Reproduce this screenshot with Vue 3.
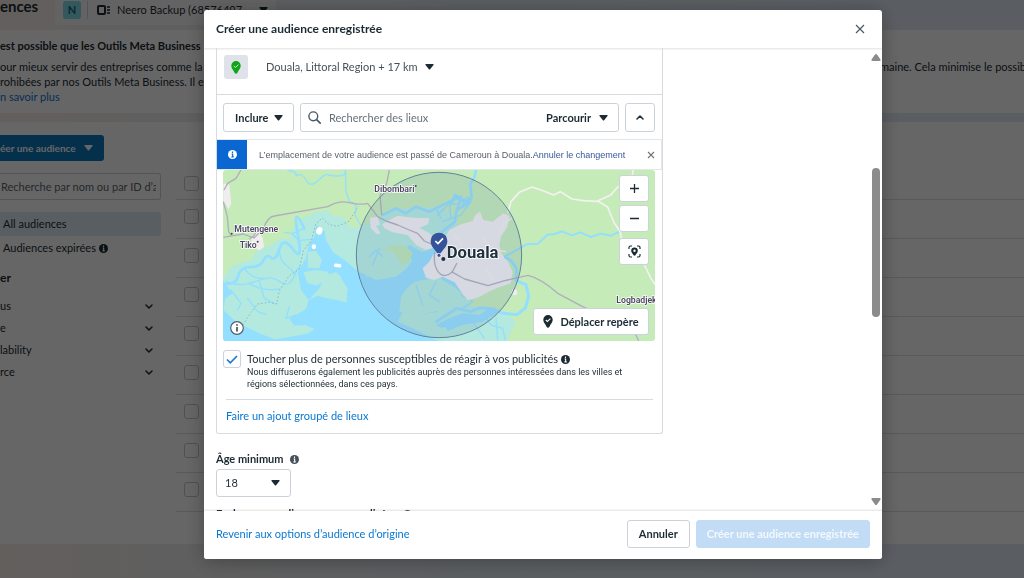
<script setup>
import { ref } from 'vue'

const rows = Array.from({ length: 8 }, (_, i) => i + 1)
const filters = ['us', 'e', 'lability', 'rce']
const search = ref('')
const place = ref('')
const reachMore = ref(true)
</script>

<template>
  <div class="page">
    <header class="topbar">
      <h1>ences</h1>
      <button class="account" type="button">
        <span class="badge">N</span>
        <span class="split"></span>
        <span class="round">
          <svg width="13" height="11" viewBox="0 0 13 11" aria-hidden="true">
            <rect x="1" y="1" width="7" height="8" rx="1" fill="none" stroke="#1c2b33" stroke-width="2" />
            <path d="M10 2h3M10 5h3M10 8h3" stroke="#1c2b33" stroke-width="1.6" />
          </svg>
        </span>
        <span class="name">Neero Backup (68576497…</span>
        <svg class="caret" width="9" height="6" viewBox="0 0 9 6" aria-hidden="true"><path d="M1 0h7q1 0 .5 1L5.300 5q-.8 1-1.600 0L.5 1Q0 0 1 0z" fill="#1c2b33" /></svg>
      </button>
    </header>

    <section class="notice">
      <h2>est possible que les Outils Meta Business</h2>
      <div class="notice-line">
        <span>our mieux servir des entreprises comme la v</span>
        <span class="tail">maine. Cela minimise le possibi</span>
      </div>
      <div class="notice-line"><span>rohibées par nos Outils Meta Business. Il est</span></div>
      <a href="#">n savoir plus</a>
    </section>

    <div class="workspace">
      <aside class="side">
        <button class="create" type="button">
          éer une audience
          <svg width="9" height="6" viewBox="0 0 9 6" aria-hidden="true"><path d="M1 0h7q1 0 .5 1L5.300 5q-.8 1-1.600 0L.5 1Q0 0 1 0z" fill="#fff" /></svg>
        </button>
        <input v-model="search" class="find" type="text" aria-label="Recherche" placeholder="Recherche par nom ou par ID d’a" />
        <a class="nav active" href="#">All audiences</a>
        <a class="nav" href="#">
          Audiences expirées
          <svg width="9" height="9" viewBox="0 0 10 10" aria-hidden="true"><circle cx="5" cy="5" r="5" fill="#1c2b33" /><path d="M5 1.700v1.500M4 4.500h1.200v3M3.800 7.600h2.600" stroke="#fff" stroke-width="1.200" fill="none" /></svg>
        </a>
        <h3>er</h3>
        <button v-for="f in filters" :key="f" class="filter" type="button">
          <span>{{ f }}</span>
          <svg width="8" height="5" viewBox="0 0 8 5" aria-hidden="true"><path d="M1 1l3 3 3-3" fill="none" stroke="#1c2b33" stroke-width="1.500" stroke-linecap="round" stroke-linejoin="round" /></svg>
        </button>
      </aside>
      <div class="list">
        <div class="list-row list-head">
          <input type="checkbox" aria-label="Tout sélectionner" />
        </div>
        <div v-for="r in rows" :key="r" class="list-row">
          <input type="checkbox" :aria-label="'Audience ' + r" />
        </div>
      </div>
    </div>

    <div class="overlay">
      <div class="modal" role="dialog" aria-labelledby="dialog-title">
        <header class="modal-head">
          <h2 id="dialog-title">Créer une audience enregistrée</h2>
          <button class="plain" type="button" aria-label="Fermer">
            <svg width="10" height="10" viewBox="0 0 10 10"><path d="M1 1l8 8M9 1l-8 8" stroke="#465a69" stroke-width="1.200" /></svg>
          </button>
        </header>

        <div class="modal-body">
          <div class="content">
            <section class="card">
              <div class="place">
                <span class="place-icon">
                  <svg width="10" height="13" viewBox="0 0 10 13" aria-hidden="true"><path d="M5 0a4.700 4.700 0 0 1 4.700 4.800C9.700 7.600 7.500 9.300 6.600 11.500Q5 14 3.400 11.500C2.500 9.300.3 7.600.3 4.800A4.700 4.700 0 0 1 5 0z" fill="#0fa516" /><path d="M2.800 5l1.600 1.500 3-2.800" fill="none" stroke="#d7efd9" stroke-width="1" /></svg>
                </span>
                <button class="plain radius" type="button">
                  Douala, Littoral Region + 17 km
                  <svg width="9" height="6" viewBox="0 0 9 6" aria-hidden="true"><path d="M1 0h7q1 0 .5 1L5.300 5q-.8 1-1.600 0L.5 1Q0 0 1 0z" fill="#1c2b33" /></svg>
                </button>
              </div>

              <div class="controls">
                <span class="select include">
                  <select aria-label="Mode"><option>Inclure</option></select>
                  <svg width="9" height="6" viewBox="0 0 9 6" aria-hidden="true"><path d="M1 0h7q1 0 .5 1L5.300 5q-.8 1-1.600 0L.5 1Q0 0 1 0z" fill="#1c2b33" /></svg>
                </span>
                <div class="searchbox">
                  <svg width="13" height="13" viewBox="0 0 13 13" aria-hidden="true"><circle cx="5.300" cy="5.300" r="4.400" fill="none" stroke="#465a69" stroke-width="1.400" /><path d="M8.600 8.600l3.600 3.600" stroke="#465a69" stroke-width="1.700" stroke-linecap="round" /></svg>
                  <input v-model="place" type="text" aria-label="Lieux" placeholder="Rechercher des lieux" />
                  <button class="plain browse" type="button">
                    Parcourir
                    <svg width="9" height="6" viewBox="0 0 9 6" aria-hidden="true"><path d="M1 0h7q1 0 .5 1L5.300 5q-.8 1-1.600 0L.5 1Q0 0 1 0z" fill="#1c2b33" /></svg>
                  </button>
                </div>
                <button class="btn fold" type="button" aria-label="Réduire">
                  <svg width="8" height="5" viewBox="0 0 8 5"><path d="M1 4l3-3 3 3" fill="none" stroke="#1c2b33" stroke-width="1.500" stroke-linecap="round" stroke-linejoin="round" /></svg>
                </button>
              </div>

              <div class="alert">
                <span class="alert-icon">
                  <svg width="9" height="9" viewBox="0 0 10 10" aria-hidden="true"><circle cx="5" cy="5" r="5" fill="#fff" /><path d="M5 1.700v1.500M4 4.500h1.200v3M3.800 7.600h2.600" stroke="#0a66d0" stroke-width="1.300" fill="none" /></svg>
                </span>
                <p>L’emplacement de votre audience est passé de Cameroun à Douala.<a href="#">Annuler le changement</a></p>
                <button class="plain" type="button" aria-label="Masquer">
                  <svg width="8" height="8" viewBox="0 0 8 8"><path d="M1 1l6 6M7 1l-6 6" stroke="#70757b" stroke-width="1.100" /></svg>
                </button>
              </div>

              <div class="map">
                <svg class="map-art" viewBox="21 15 1296 513" preserveAspectRatio="xMidYMid slice">
                  <rect x="0" y="0" width="1340" height="540" fill="#c4ebb8" />
                  <!-- coast and mangroves -->
                  <path d="M0 355L24 338 45 304 110 282 118 262 165 240 195 220 222 222 232 186 262 160 300 142 336 136 352 155 380 152 402 185 430 190 450 178 480 160 510 150 540 128 575 132 600 122 640 128 670 124 700 140 740 200 690 330 760 400 850 430 900 470 865 540 0 540z" fill="#b3e9df" />
                  <path d="M0 345L22 350 50 385 28 400 22 435 60 470 130 505 190 528 0 540z" fill="#93dfff" />
                  <path d="M150 528L275 506 296 492 268 480 235 482 220 462 270 432 278 405 305 392 330 400 350 402 390 412 394 370 372 340 395 322 422 320 440 325 480 345 540 335 570 312 590 285 560 262 580 240 620 262 665 240 690 300 740 350 740 385 700 375 660 400 665 440 620 448 560 440 545 470 590 490 640 515 700 540 150 540z" fill="#93dfff" />
                  <path d="M660 480L700 460 740 445 790 450 820 430 850 440 800 470 740 480 690 500z" fill="#93dfff" />
                  <path d="M300 180L325 195 330 225 350 260 385 285 425 318 450 350 405 360 360 322 330 330 310 370 278 405 255 375 245 322 270 280 280 235 296 215z" fill="#93dfff" />
                  <path d="M555 395Q585 345 625 345L665 335 720 370 760 405 700 430 620 448 550 440z" fill="#b3e9df" />
                  <path d="M306 378L330 340 370 330 394 370 392 410 345 402z" fill="#b3e9df" />
                  <path d="M276 260L300 258 318 285 310 310 275 308z M262 322L300 315 335 320 345 340 300 362 275 355z" fill="#b3e9df" />
                  <path d="M450 240L500 230 545 265 552 300 520 335 450 335 445 300z" fill="#b3e9df" />
                  <path d="M635 490L690 487 700 510 650 520z" fill="#b3e9df" />
                  <path d="M500 255L530 240 560 240 590 262 580 290 560 300 530 260z" fill="#bfe8b6" />
                  <path d="M740 200l40-40 10-40 30-40 90 0 20 200-20 100-60 60-90-20z" fill="#c4ebb8" />
                  <g fill="none" stroke="#93dfff" stroke-linecap="round" stroke-linejoin="round">
                    <path d="M0 355Q60 365 66 335T102 306 142 286 165 278 190 252 232 254 245 205 265 190" stroke-width="8" />
                    <path d="M30 350Q70 365 100 355T150 340 195 352 235 332 255 310M100 355Q135 380 190 372M85 310Q110 345 150 340M190 252Q190 285 210 300T240 330M130 350l15 50 30 15M45 375l30 40-10 20M228 205l20 22 35-4M300 235l20-15M95 400l30 40 25 8M265 190l-35 15-25-3" stroke-width="4" />
                    <path d="M215 15q30 5 25 18 18-12 30 12t36 2 30-18 30 4 24-18M388 15l2 65 10 28 20 10-2 35 18 30" stroke-width="4" />
                    <path d="M780 15l-5 22-12 20 4 40-10 18-35 20-5 35-45 35M757 115l-40-25-10 25M735 95l-10 35M760 100l-20 20M500 150l40-20 30 15 30-20 40 15 60-30 25-10 20 8" stroke-width="8" />
                    <path d="M665 150l30-30 35-5 25-20M680 170l55-20 30-40M660 130l15 30M700 110l5 50M600 360l20 60M660 350l-20 40 30 20M735 390l35 20-30 20M220 425l-10 35 30-10M490 250l-20 50M460 275l20-20 20 20" stroke-width="4" />
                    <path d="M866 275l45-25 20-12 35-2 28-27 22-2 22-8 30 12 25-9 32 14 30-10 30 6 25-12" stroke-width="6" />
                    <path d="M800 445l25 35 35 10 8 35M840 460l5 65M770 470l35 50" stroke-width="4" />
                  </g>
                  <!-- built-up areas -->
                  <g fill="#f0edee">
                    <path d="M22 55l18 5 6 55-8 18-16-25zM106 215l22-15 12 18 4 28-14 10-24-14z" />
                    <path d="M462 158L485 155 492 180 480 182 494 205 482 208 464 188z" />
                    <path d="M498 178L530 160 545 152 590 158 640 160 636 178 610 188 640 205 665 225 665 245 630 255 600 240 575 210 530 202 505 190z" />
                    <path d="M620 310L640 290 652 268 675 262 680 230 700 195 735 178 770 168 778 150 792 140 802 165 830 170 862 145 880 152 874 185 855 215 850 240 856 265 876 290 890 320 884 355 845 368 822 378 790 396 756 406 742 390 716 352 680 335 655 345 630 338z" />
                    <circle cx="895" cy="382" r="9" />
                  </g>
                  <path d="M866 275l20 12 16 25-2 35 30 12 8 35-10 35-25 20-45-5-25-12-40-4-30 12-40-10-65 42" fill="none" stroke="#93dfff" stroke-width="9" stroke-linejoin="round" />
                  <g fill="#fff"><rect x="301" y="186" width="18" height="23" rx="9" transform="rotate(20 310 198)" /><rect x="287" y="238" width="13" height="14" rx="6" /><rect x="354" y="296" width="22" height="11" rx="5" transform="rotate(8 365 301)" /></g>
                  <!-- roads -->
                  <g fill="none" stroke="#b3adbd" stroke-width="4" stroke-linejoin="round">
                    <path d="M75 15l-15 25-25 15-11 20M22 110l12 45 4 45 8 12M22 217l30-5 30-5 32 12 28-28Q155 155 175 153L335 125Q370 105 400 113T455 115L485 155 510 168 545 180 580 195 605 205 625 228 660 243M520 15l-8 40-20 35 5 60M656 262q-5 40 12 60t40 0l15-28M706 320l40 22 70 20 50-15 70-16Q975 340 1025 385L1100 425 1250 490 1268 527" />
                    <path d="M100 222l12-8 10-14" />
                  </g>
                  <g fill="none" stroke="#8db9c9" stroke-width="3" stroke-dasharray="5 6">
                    <path d="M80 480l25-38 20-25 35-5 22 5 8-40 30-45 30-20 12-55 25-32 12-48 20-18 20 20 25 5 35-15 28-45" />
                  </g>
                  <g fill="none" stroke="#f4f1f0" stroke-width="5" stroke-linejoin="round">
                    <path d="M875 145l10-35 25-28 38-16 35 12 30 12 20-10 35 22 35 5 40 2 40-18 25-28M1145 108l30 18 18 45 20 30 5 30M1252 15l-4 20M1285 300l20 40 13 20M845 215l20-40 22-15M715 210l25 30M800 215q20 40 70 45M810 310l20 35" />
                  </g>
                  <circle cx="669" cy="270" r="248" fill="#6581a7" fill-opacity=".18" stroke="#64819f" stroke-width="3" />
                  <!-- labels -->
                  <g class="towns" fill="#4c4660" stroke="#fff" stroke-width="4" paint-order="stroke">
                    <text x="475" y="80">Dibombari</text>
                    <text x="55" y="201">Mutengene</text>
                    <text x="71" y="249">Tiko</text>
                    <text x="1201" y="415">Logbadjek</text>
                  </g>
                  <g fill="#4c4660"><circle cx="599" cy="63" r="3" /><circle cx="47" cy="206" r="3" /><circle cx="125" cy="230" r="3" /></g>
                  <text class="city" x="692" y="278" fill="#22313f" stroke="#fff" stroke-width="5" paint-order="stroke">Douala</text>
                  <circle cx="682" cy="282" r="6" fill="#22313f" />
                  <path d="M669 203a25 25 0 0 1 25 25c0 16-12 25-18 34q-7 10-14 0c-6-9-18-18-18-34a25 25 0 0 1 25-25z" fill="#34539a" />
                  <circle cx="669" cy="271" r="6" fill="#34539a" stroke="#fff" stroke-width="2" />
                  <path d="M658 228l8 8 15-16" fill="none" stroke="#fff" stroke-width="5" />
                </svg>
                <button class="map-info" type="button" aria-label="Informations sur la carte">
                  <svg width="14" height="14" viewBox="0 0 14 14"><circle cx="7" cy="7" r="6.300" fill="#fff" stroke="#55606a" stroke-width="1.200" /><path d="M7 3.200v1.600M7 6v4.600" stroke="#2b3640" stroke-width="1.500" /></svg>
                </button>
                <div class="map-tools">
                  <button class="btn" type="button" aria-label="Zoom avant"><svg width="9" height="9" viewBox="0 0 9 9"><path d="M4.500 0v9M0 4.500h9" stroke="#1c2b33" stroke-width="1.300" /></svg></button>
                  <button class="btn" type="button" aria-label="Zoom arrière"><svg width="9" height="9" viewBox="0 0 9 9"><path d="M0 4.500h9" stroke="#1c2b33" stroke-width="1.300" /></svg></button>
                  <button class="btn locate" type="button" aria-label="Recentrer"><svg width="13" height="13" viewBox="0 0 13 13"><path d="M1 4V2.500Q1 1 2.500 1H4M9 1h1.500Q12 1 12 2.500V4M12 9v1.500Q12 12 10.500 12H9M4 12H2.500Q1 12 1 10.500V9" fill="none" stroke="#1c2b33" stroke-width="1.200" /><path fill-rule="evenodd" d="M6.500 2.500a3.300 3.300 0 0 1 3.300 3.300c0 2-1.500 2.800-2.200 4.200q-1.100 1.500-2.200 0C4.700 8.600 3.200 7.800 3.200 5.800a3.300 3.300 0 0 1 3.300-3.300zm0 2.100a1.200 1.200 0 1 0 0 2.400 1.200 1.200 0 0 0 0-2.400z" fill="#1c2b33" /></svg></button>
                </div>
                <button class="btn move" type="button">
                  <svg width="10" height="13" viewBox="0 0 10 13" aria-hidden="true"><path d="M5 0a4.700 4.700 0 0 1 4.700 4.800C9.700 7.600 7.500 9.300 6.600 11.500Q5 14 3.400 11.500C2.500 9.300.3 7.600.3 4.800A4.700 4.700 0 0 1 5 0z" fill="#1c2b33" /><path d="M2.800 5l1.600 1.500 3-2.800" fill="none" stroke="#fff" stroke-width="1.100" /></svg>
                  Déplacer repère
                </button>
              </div>

              <div class="reach">
                <input id="reach" v-model="reachMore" type="checkbox" />
                <svg class="tick" width="12" height="9" viewBox="0 0 12 9" aria-hidden="true"><path d="M1 4.500l3.300 3.300L11 1" fill="none" stroke="#1877d0" stroke-width="1.600" /></svg>
                <div>
                  <label for="reach">
                    Toucher plus de personnes susceptibles de réagir à vos publicités
                    <svg width="9" height="9" viewBox="0 0 10 10" aria-hidden="true"><circle cx="5" cy="5" r="5" fill="#1c2b33" /><path d="M5 1.700v1.500M4 4.500h1.200v3M3.800 7.600h2.600" stroke="#fff" stroke-width="1.200" fill="none" /></svg>
                  </label>
                  <p>Nous diffuserons également les publicités auprès des personnes intéressées dans les villes et<br />régions sélectionnées, dans ces pays.</p>
                </div>
              </div>
              <div class="bulk"><a href="#">Faire un ajout groupé de lieux</a></div>
            </section>

            <section class="field">
              <label for="age">
                Âge minimum
                <svg width="9" height="9" viewBox="0 0 10 10" aria-hidden="true"><circle cx="5" cy="5" r="5" fill="#465058" /><path d="M5 1.700v1.500M4 4.500h1.200v3M3.800 7.600h2.600" stroke="#fff" stroke-width="1.200" fill="none" /></svg>
              </label>
              <span class="select age">
                <select id="age"><option>18</option></select>
                <svg width="9" height="6" viewBox="0 0 9 6" aria-hidden="true"><path d="M1 0h7q1 0 .5 1L5.300 5q-.8 1-1.600 0L.5 1Q0 0 1 0z" fill="#1c2b33" /></svg>
              </span>
            </section>
            <section class="field next">
              <strong>
                Exclure ces audiences personnalisées
                <svg width="9" height="9" viewBox="0 0 10 10" aria-hidden="true"><circle cx="5" cy="5" r="5" fill="#465058" /></svg>
              </strong>
            </section>
          </div>
          <div class="scroll" aria-hidden="true">
            <svg width="10" height="7" viewBox="0 0 10 7"><path d="M5 0q.6 0 1 .6l3.500 5Q10 7 8.500 7h-7Q0 7 .5 5.600L4 .6Q4.400 0 5 0z" fill="#8b8b8b" /></svg>
            <div class="track"><div class="thumb"></div></div>
            <svg width="10" height="7" viewBox="0 0 10 7"><path d="M5 7q.6 0 1-.6l3.500-5Q10 0 8.500 0h-7Q0 0 .5 1.400L4 6.400Q4.400 7 5 7z" fill="#8b8b8b" /></svg>
          </div>
        </div>

        <footer class="modal-foot">
          <a href="#">Revenir aux options d’audience d’origine</a>
          <div class="actions">
            <button class="btn" type="button">Annuler</button>
            <button class="btn primary" type="button" disabled>Créer une audience enregistrée</button>
          </div>
        </footer>
      </div>
    </div>
  </div>
</template>

<style>
body {
  margin: 0;
  overflow: hidden;
}
</style>

<style scoped>
* {
  box-sizing: border-box;
}
.page {
  height: 100vh;
  overflow: hidden;
  display: flex;
  flex-direction: column;
  background: linear-gradient(90deg, #f6eee9, #e5edf5 45%, #e1ebf6);
  color: #1c2b33;
  font: 11px/14px Lato, Roboto, "Noto Sans", sans-serif;
}
h1, h2, h3, p {
  margin: 0;
}
a {
  color: #0a78d1;
  text-decoration: none;
}
button, input, select {
  font: inherit;
  color: inherit;
  margin: 0;
}
button {
  white-space: nowrap;
}
svg {
  flex: none;
}
.plain {
  display: flex;
  align-items: center;
  padding: 0;
  border: 0;
  background: none;
}

/* page behind the dialog */
.topbar {
  flex: none;
  height: 30px;
  display: flex;
  align-items: flex-start;
}
.topbar h1 {
  width: 55px;
  font-size: 15px;
  line-height: 12px;
}
.account {
  height: 25px;
  width: 221px;
  display: flex;
  align-items: flex-start;
  padding: 1px 8px 0;
  border: 0;
  border-radius: 0 0 4px 4px;
  background: #fff9;
}
.badge {
  width: 18px;
  height: 18px;
  border-radius: 3px;
  background: #7fdcea;
  color: #17697a;
  font-weight: 700;
  line-height: 18px;
}
.split {
  width: 1px;
  height: 18px;
  margin: 0 7px 0 6px;
  background: #ccd2d8;
}
.round {
  width: 17px;
  height: 18px;
  display: flex;
  align-items: center;
  justify-content: center;
}
.name {
  flex: 1;
  margin-left: 5px;
  text-align: left;
  line-height: 18px;
}
.account .caret {
  margin-top: 6px;
}
.notice {
  flex: none;
  height: 83px;
  padding-top: 8px;
  background: #fff;
  line-height: 15px;
}
.notice h2 {
  font-size: 11px;
  line-height: 15px;
  margin-bottom: 6px;
}
.notice-line {
  display: flex;
  justify-content: space-between;
  white-space: nowrap;
}
.tail {
  width: 144px;
}
.workspace {
  flex: none;
  display: flex;
  gap: 15px;
  margin-top: 9px;
  height: 422px;
  background: #fff;
}
.side {
  width: 161px;
  padding-top: 13px;
}
.create {
  width: 104px;
  height: 26px;
  display: flex;
  align-items: center;
  justify-content: space-between;
  padding: 0 11px 0 0;
  border: 0;
  border-radius: 0 3px 3px 0;
  background: #0a78be;
  color: #fff;
  font-size: 10px;
  font-weight: 700;
}
.find {
  width: 100%;
  height: 27px;
  margin: 12px 0;
  padding: 0 4px 0 1px;
  border: 1px solid #ccd2d8;
  border-left: 0;
  border-radius: 0 3px 3px 0;
  background: #fff;
}
.find::placeholder {
  color: #5b6770;
}
.nav {
  display: flex;
  align-items: center;
  gap: 3px;
  height: 24px;
  padding-left: 3px;
  color: #1c2b33;
}
.active {
  background: #dfebf7;
  border-radius: 0 3px 3px 0;
}
.side h3 {
  font-size: 12px;
  line-height: 16px;
  margin: 10px 0 8px;
}
.filter {
  width: 100%;
  height: 22px;
  display: flex;
  align-items: center;
  justify-content: space-between;
  padding: 2px 8px 0 0;
  border: 0;
  background: none;
}
.list {
  flex: 1;
}
.list-row {
  height: 39px;
  border-bottom: 1px solid #dbdfe3;
  padding: 9px 0 0 8px;
}
.list-head {
  height: 78px;
  padding-top: 54px;
}
.list-row input {
  display: block;
  appearance: none;
  width: 15px;
  height: 15px;
  border: 1px solid #c3c9cf;
  border-radius: 3px;
}

/* dialog */
.overlay {
  position: fixed;
  inset: 0;
  display: flex;
  padding: 10px 142px 19px 204px;
  background: rgba(0, 0, 0, 0.6);
}
.modal {
  flex: 1;
  min-width: 0;
  display: flex;
  flex-direction: column;
  overflow: hidden;
  border-radius: 3px;
  background: #fff;
  box-shadow: 0 2px 20px rgba(0, 0, 0, 0.3);
}
.modal-head {
  flex: none;
  height: 38px;
  display: flex;
  align-items: center;
  justify-content: space-between;
  padding: 0 17px 0 12px;
  box-shadow: 0 1px 2px rgba(0, 0, 0, 0.12);
}
.modal-head h2 {
  font-size: 12px;
  line-height: 16px;
}
.modal-body {
  flex: 1;
  min-height: 0;
  display: flex;
  justify-content: space-between;
  overflow: hidden;
}
.content {
  flex: 0 1 459px;
  padding-left: 12px;
}
.card {
  border: 1px solid #d5dbe1;
  border-top: 0;
  border-radius: 0 0 3px 3px;
}
.place {
  display: flex;
  align-items: center;
  gap: 18px;
  padding: 7px 7px 15px;
  border-bottom: 1px solid #d5dbe1;
}
.place-icon {
  width: 24px;
  height: 24px;
  display: flex;
  align-items: center;
  justify-content: center;
  border-radius: 3px;
  background: #dfe3e9;
}
.radius {
  gap: 7px;
  color: #465058;
}
.controls {
  display: flex;
  gap: 6px;
  padding: 8px 7px 7px 6px;
}
.btn, .searchbox, .select {
  height: 29px;
  border: 1px solid #cbd2d9;
  border-radius: 3px;
  background: #fff;
}
.btn {
  display: flex;
  align-items: center;
  justify-content: center;
  padding: 0 11px;
  font-weight: 700;
}
.select {
  display: grid;
  align-items: center;
}
.select > * {
  grid-area: 1 / 1;
}
.select select {
  appearance: none;
  width: 100%;
  height: 100%;
  border: 0;
  padding: 0 0 0 11px;
  background: none;
}
.select > svg {
  justify-self: end;
  margin-right: 10px;
  pointer-events: none;
}
.include {
  width: 71px;
  font-weight: 700;
}
.searchbox {
  flex: 1;
  min-width: 0;
  display: flex;
  align-items: center;
  gap: 8px;
  padding: 0 10px 0 7px;
}
.searchbox input {
  flex: 1;
  min-width: 0;
  padding: 0;
  border: 0;
  background: none;
}
.searchbox input::placeholder {
  color: #65717b;
}
.browse {
  gap: 8px;
  font-weight: 700;
}
.fold {
  width: 30px;
  padding: 0;
}
.alert {
  height: 31px;
  display: flex;
  align-items: center;
  border: 1px solid #e4e7ea;
  border-left: 0;
  font: 9px/12px "Liberation Sans", Arial, sans-serif;
  color: #5a6068;
}
.alert-icon {
  width: 30px;
  height: 29px;
  display: flex;
  align-items: center;
  justify-content: center;
  background: #0a66d0;
}
.alert p {
  flex: 1;
  padding-left: 12px;
  white-space: nowrap;
}
.alert a {
  color: #385898;
}
.alert .plain {
  padding-right: 6px;
}
.map {
  position: relative;
  height: 171px;
  margin: 0 7px 0 6px;
  overflow: hidden;
  border-radius: 3px;
}
.map-art {
  display: block;
  width: 100%;
  height: 100%;
}
.towns {
  font: 600 26px Roboto, sans-serif;
}
.city {
  font: 700 50px Roboto, sans-serif;
}
.map-info {
  position: absolute;
  left: 7px;
  bottom: 6px;
  width: 14px;
  height: 14px;
  padding: 0;
  border: 0;
  background: none;
}
.map-info svg {
  display: block;
}
.map-tools {
  position: absolute;
  top: 5px;
  right: 6px;
  display: flex;
  flex-direction: column;
  gap: 3px;
}
.map-tools .btn {
  width: 30px;
  height: 27px;
  padding: 0;
}
.map-tools .locate {
  margin-top: 3px;
}
.move {
  position: absolute;
  right: 6px;
  bottom: 6px;
  width: 116px;
  height: 27px;
  gap: 7px;
  padding: 0;
}
.reach {
  display: flex;
  gap: 6px;
  position: relative;
  padding: 9px 6px;
}
.reach input {
  flex: none;
  appearance: none;
  width: 18px;
  height: 18px;
  border: 1px solid #cbd2d9;
  border-radius: 3px;
}
.tick {
  position: absolute;
  left: 9px;
  top: 14px;
  pointer-events: none;
}
.reach label {
  display: flex;
  align-items: center;
  gap: 3px;
  padding-top: 2px;
  white-space: nowrap;
}
.reach p {
  font: 9px/12px Roboto, sans-serif;
  white-space: nowrap;
}
.bulk {
  margin: 0 9px;
  padding: 9px 0 10px;
  border-top: 1px solid #d5dbe1;
}
.field {
  padding-top: 18px;
}
.field label, .field strong {
  display: flex;
  align-items: center;
  gap: 6px;
  font-weight: 700;
  white-space: nowrap;
}
.age {
  width: 75px;
  height: 28px;
  margin-top: 3px;
}
.age select {
  padding-left: 8px;
}
.next {
  padding-top: 10px;
}
.scroll {
  width: 12px;
  display: flex;
  flex-direction: column;
  align-items: center;
  padding: 6px 0;
}
.track {
  flex: 1;
  padding-top: 107px;
}
.thumb {
  width: 8px;
  height: 149px;
  border-radius: 4px;
  background: #8b8b8b;
}
.modal-foot {
  flex: none;
  height: 48px;
  display: flex;
  align-items: center;
  justify-content: space-between;
  padding: 0 12px 2px;
  background: #fff;
  box-shadow: 0 -1px 2px rgba(0, 0, 0, 0.12);
}
.actions {
  display: flex;
  gap: 6px;
}
.actions .btn {
  height: 28px;
}
.actions .primary {
  padding: 0 10px;
  border-color: #c2dcf5;
  background: #c2dcf5;
  color: #f2f8fd;
}
</style>
